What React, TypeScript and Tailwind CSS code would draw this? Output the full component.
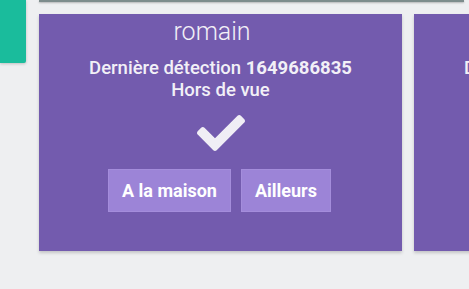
import { FaCheck } from "react-icons/fa";

type Person = { name: string; lastSeen: string; status: string };

const people: Person[] = [
  { name: "romain", lastSeen: "1649686835", status: "Hors de vue" },
  { name: "julie", lastSeen: "1649686835", status: "Hors de vue" },
];

function PersonCard({ person }: { person: Person }) {
  return (
    <div className="w-[363px] h-[237px] shrink-0 bg-[#735bae] shadow-[0_2px_3px_rgba(0,0,0,0.18)] flex flex-col items-center text-[#f2f0f7]">
      <div className="mt-[3px] pr-[17px] text-[25px] leading-[30px] font-light">{person.name}</div>
      <div className="mt-[11px] text-[18.5px] leading-[21.5px] font-medium text-center whitespace-nowrap">
        <div>
          Dernière détection <span className="font-bold">{person.lastSeen}</span>
        </div>
        <div>{person.status}</div>
      </div>
      <FaCheck className="mt-[8px] w-[48px] h-[48px] text-[#f0eef5]" />
      <div className="mt-[12px] flex gap-[10px] pr-[2px]">
        <button className="h-[43px] px-[13px] bg-[#9c84d7] border border-[#a48ddb] text-white text-[18px] font-bold whitespace-nowrap">
          A la maison
        </button>
        <button className="h-[43px] px-[13px] bg-[#9c84d7] border border-[#a48ddb] text-white text-[18px] font-bold whitespace-nowrap">
          Ailleurs
        </button>
      </div>
    </div>
  );
}

export default function App() {
  return (
    <div className="w-[469px] h-[289px] overflow-hidden bg-[#eeeff1] flex font-['Roboto',sans-serif]">
      {/* sidebar tab */}
      <div className="w-[26px] h-[63px] shrink-0 bg-[#1abc9c] rounded-br-[2px] shadow-[0_1px_3px_rgba(0,0,0,0.2)]" />

      <div className="ml-[13px] flex flex-col min-w-0">
        {/* bottom edge of the panel above */}
        <div className="h-[2px] w-[425px] bg-[#7d8c8c] shadow-[0_1px_2px_rgba(0,0,0,0.25)]" />

        <div className="mt-[12px] flex gap-[12px]">
          {people.map((p) => (
            <PersonCard key={p.name} person={p} />
          ))}
        </div>
      </div>
    </div>
  );
}
